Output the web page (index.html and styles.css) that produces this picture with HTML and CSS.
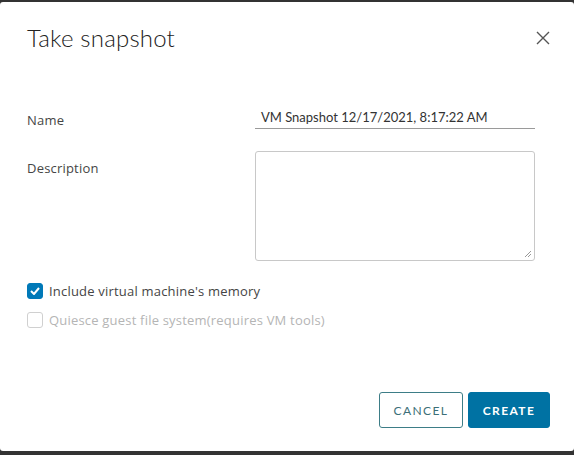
FILE: index.html
```html
<!DOCTYPE html>
<html>
<head>
<meta charset="utf-8">
<link rel="stylesheet" href="styles.css">
</head>
<body>
<div class="modal">
  <div class="header">
    <h1 class="title">Take snapshot</h1>
    <button class="close" aria-label="Close">
      <svg width="14" height="14" viewBox="0 0 14 14"><path d="M1 1L13 13M13 1L1 13" stroke="#555" stroke-width="1.4" fill="none"/></svg>
    </button>
  </div>
  <div class="body">
    <div class="row row-name">
      <label class="label">Name</label>
      <div class="input">VM Snapshot 12/17/2021, 8:17:22 AM</div>
    </div>
    <div class="row row-desc">
      <label class="label label-desc">Description</label>
      <div class="textarea">
        <svg class="grip" width="8" height="8" viewBox="0 0 8 8"><path d="M7 1L1 7M7 4L4 7" stroke="#999" stroke-width="1" fill="none"/></svg>
      </div>
    </div>
    <div class="checks">
      <div class="check">
        <span class="box checked">
          <svg width="10" height="8" viewBox="0 0 10 8"><path d="M1 4L4 7L9 1" stroke="#fff" stroke-width="2" fill="none"/></svg>
        </span>
        <span class="check-label">Include virtual machine's memory</span>
      </div>
      <div class="check disabled">
        <span class="box"></span>
        <span class="check-label">Quiesce guest file system(requires VM tools)</span>
      </div>
    </div>
  </div>
  <div class="footer">
    <button class="btn btn-outline">CANCEL</button>
    <button class="btn btn-primary">CREATE</button>
  </div>
</div>
</body>
</html>
```
FILE: styles.css
```css
html, body {
  margin: 0;
  padding: 0;
}
body {
  background: #333;
  width: 574px;
  height: 455px;
  overflow: hidden;
  font-family: "Open Sans", sans-serif;
}
.modal {
  margin-top: 2px;
  height: 449px;
  background: #fff;
  border-radius: 3px;
  display: flex;
  flex-direction: column;
  box-sizing: border-box;
}
.header {
  display: flex;
  justify-content: space-between;
  align-items: center;
  padding: 21px 24px 0 27px;
}
.title {
  margin: 0;
  font-family: "Lato", sans-serif;
  font-weight: 300;
  font-size: 24px;
  color: #222;
  letter-spacing: 0.2px;
  line-height: 30px;
}
.close {
  border: 0;
  background: none;
  padding: 0;
  width: 14px;
  height: 14px;
  display: flex;
  margin-top: 0;
}
.body {
  padding: 0 39px 0 27px;
  flex: 1;
}
.row {
  display: flex;
  justify-content: space-between;
}
.row-name {
  margin-top: 55px;
  align-items: flex-end;
}
.label {
  font-size: 13px;
  letter-spacing: 0.2px;
  color: #454545;
  line-height: 16px;
}
.row-name .label {
  padding-bottom: 1px;
}
.input {
  width: 274px;
  padding-left: 6px;
  border-bottom: 1px solid #9a9a9a;
  font-family: "Lato", sans-serif;
  font-size: 13px;
  color: #333;
  line-height: 19px;
  padding-bottom: 1px;
}
.row-desc {
  margin-top: 22px;
}
.label-desc {
  margin-top: 9px;
}
.textarea {
  width: 278px;
  height: 108px;
  border: 1px solid #c8c8c8;
  border-radius: 3px;
  position: relative;
}
.grip {
  position: absolute;
  right: 2px;
  bottom: 2px;
}
.checks {
  margin-top: 22px;
  display: flex;
  flex-direction: column;
  gap: 13px;
}
.check {
  display: flex;
  align-items: center;
  gap: 6px;
}
.box {
  width: 16px;
  height: 16px;
  box-sizing: border-box;
  border: 1px solid #d0d0d0;
  border-radius: 3px;
  display: flex;
  align-items: center;
  justify-content: center;
}
.box.checked {
  background: #0079b8;
  border-color: #0079b8;
}
.check-label {
  font-size: 13px;
  letter-spacing: 0.2px;
  color: #454545;
  line-height: 16px;
}
.disabled .check-label {
  color: #b5b5b5;
}
.footer {
  display: flex;
  justify-content: flex-end;
  gap: 5px;
  padding: 0 24px 23px 0;
}
.btn {
  height: 36px;
  border-radius: 3px;
  font-family: "Lato", sans-serif;
  font-size: 12px;
  letter-spacing: 1.4px;
  padding: 0;
  cursor: pointer;
}
.btn-outline {
  width: 84px;
  background: #fff;
  border: 1px solid #3d7d87;
  color: #3b6f78;
  font-weight: 400;
}
.btn-primary {
  width: 82px;
  background: #0072a3;
  border: 1px solid #0072a3;
  color: #fff;
  font-weight: 700;
}
```
